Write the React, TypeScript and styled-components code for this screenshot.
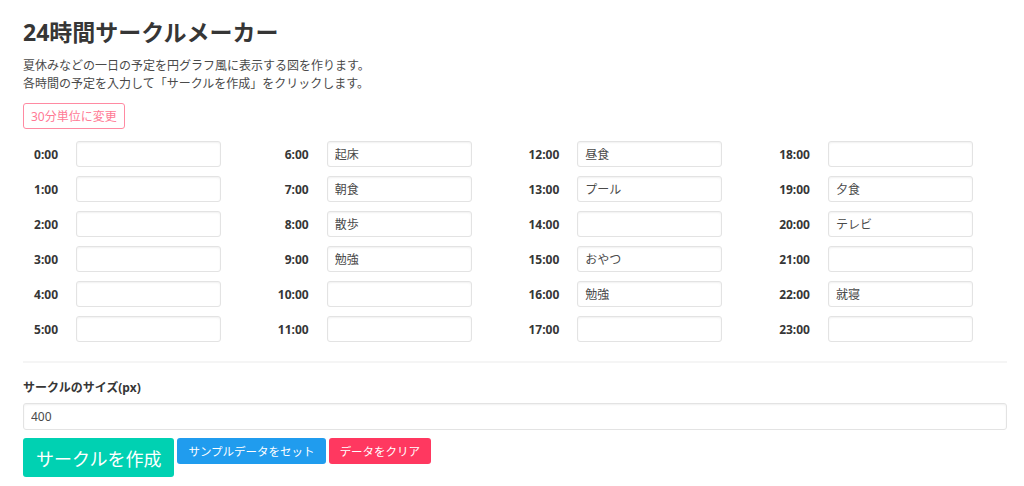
import React from 'react';
import styled, { createGlobalStyle } from 'styled-components';

const GlobalStyle = createGlobalStyle`
  html, body {
    margin: 0;
    padding: 0;
    background: #ffffff;
  }
  body {
    font-family: "Noto Sans", "Noto Sans CJK JP", sans-serif;
    color: #4a4a4a;
  }
  * { box-sizing: border-box; }
`;

const Page = styled.div`
  padding: 17px 17px 0 23px;
  width: 1024px;
`;

const Title = styled.h1`
  margin: 0;
  font-size: 23px;
  line-height: 30px;
  font-weight: 700;
  color: #363636;
`;

const Lead = styled.p`
  margin: 10px 0 0;
  font-size: 12px;
  line-height: 18px;
  color: #4a4a4a;
`;

const OutlineButton = styled.button`
  margin-top: 10px;
  height: 26px;
  padding: 0 7px;
  font-family: inherit;
  font-size: 12px;
  color: #ff7a95;
  background: #fff;
  border: 1px solid #ff8aa2;
  border-radius: 3px;
`;

const SlotGrid = styled.div`
  margin-top: 12px;
  display: grid;
  grid-template-columns: repeat(4, 250.67px);
  row-gap: 9px;
  grid-auto-flow: column;
  grid-template-rows: repeat(6, 26px);
`;

const Slot = styled.div`
  display: flex;
  align-items: center;
`;

const SlotLabel = styled.label`
  width: 35px;
  text-align: right;
  font-size: 12px;
  font-weight: 700;
  color: #363636;
  margin-right: 18px;
`;

const TextInput = styled.input<{ $full?: boolean }>`
  width: ${p => (p.$full ? '984px' : '145px')};
  height: ${p => (p.$full ? '27px' : '26px')};
  padding: 0 7px;
  font-family: inherit;
  font-size: 12px;
  color: #4a4a4a;
  background: #fff;
  border: 1px solid #e3e3e3;
  border-radius: 3px;
  box-shadow: inset 0 1px 2px rgba(10, 10, 10, 0.06);
  outline: none;
`;

const Rule = styled.hr`
  margin: 19px 0 0;
  width: 984px;
  height: 2px;
  border: none;
  background: #f5f5f5;
`;

const FieldLabel = styled.div`
  margin-top: 16px;
  font-size: 12px;
  line-height: 18px;
  font-weight: 700;
  color: #363636;
`;

const SizeField = styled.div`
  margin-top: 6px;
`;

const ButtonRow = styled.div`
  margin-top: 8px;
  display: flex;
  align-items: flex-start;
  gap: 3px;
`;

const SolidButton = styled.button<{ $bg: string; $large?: boolean }>`
  height: ${p => (p.$large ? '39px' : '26px')};
  padding: ${p => (p.$large ? '0 12px' : '0 10px')};
  font-family: inherit;
  font-size: ${p => (p.$large ? '18px' : '11.5px')};
  color: #fff;
  background: ${p => p.$bg};
  border: 1px solid transparent;
  border-radius: 3px;
  white-space: nowrap;
`;

const schedule: Record<number, string> = {
  6: '起床',
  7: '朝食',
  8: '散歩',
  9: '勉強',
  12: '昼食',
  13: 'プール',
  15: 'おやつ',
  16: '勉強',
  19: '夕食',
  20: 'テレビ',
  22: '就寝',
};

const hours = Array.from({ length: 24 }, (_, i) => i);

export default function App() {
  return (
    <>
      <GlobalStyle />
      <Page>
        <Title>24時間サークルメーカー</Title>
        <Lead>
          夏休みなどの一日の予定を円グラフ風に表示する図を作ります。
          <br />
          各時間の予定を入力して「サークルを作成」をクリックします。
        </Lead>
        <OutlineButton>30分単位に変更</OutlineButton>
        <SlotGrid>
          {hours.map(h => (
            <Slot key={h}>
              <SlotLabel>{h}:00</SlotLabel>
              <TextInput defaultValue={schedule[h] ?? ''} />
            </Slot>
          ))}
        </SlotGrid>
        <Rule />
        <FieldLabel>サークルのサイズ(px)</FieldLabel>
        <SizeField>
          <TextInput $full defaultValue="400" />
        </SizeField>
        <ButtonRow>
          <SolidButton $bg="#00d1b2" $large>サークルを作成</SolidButton>
          <SolidButton $bg="#209cee">サンプルデータをセット</SolidButton>
          <SolidButton $bg="#ff3860">データをクリア</SolidButton>
        </ButtonRow>
      </Page>
    </>
  );
}
